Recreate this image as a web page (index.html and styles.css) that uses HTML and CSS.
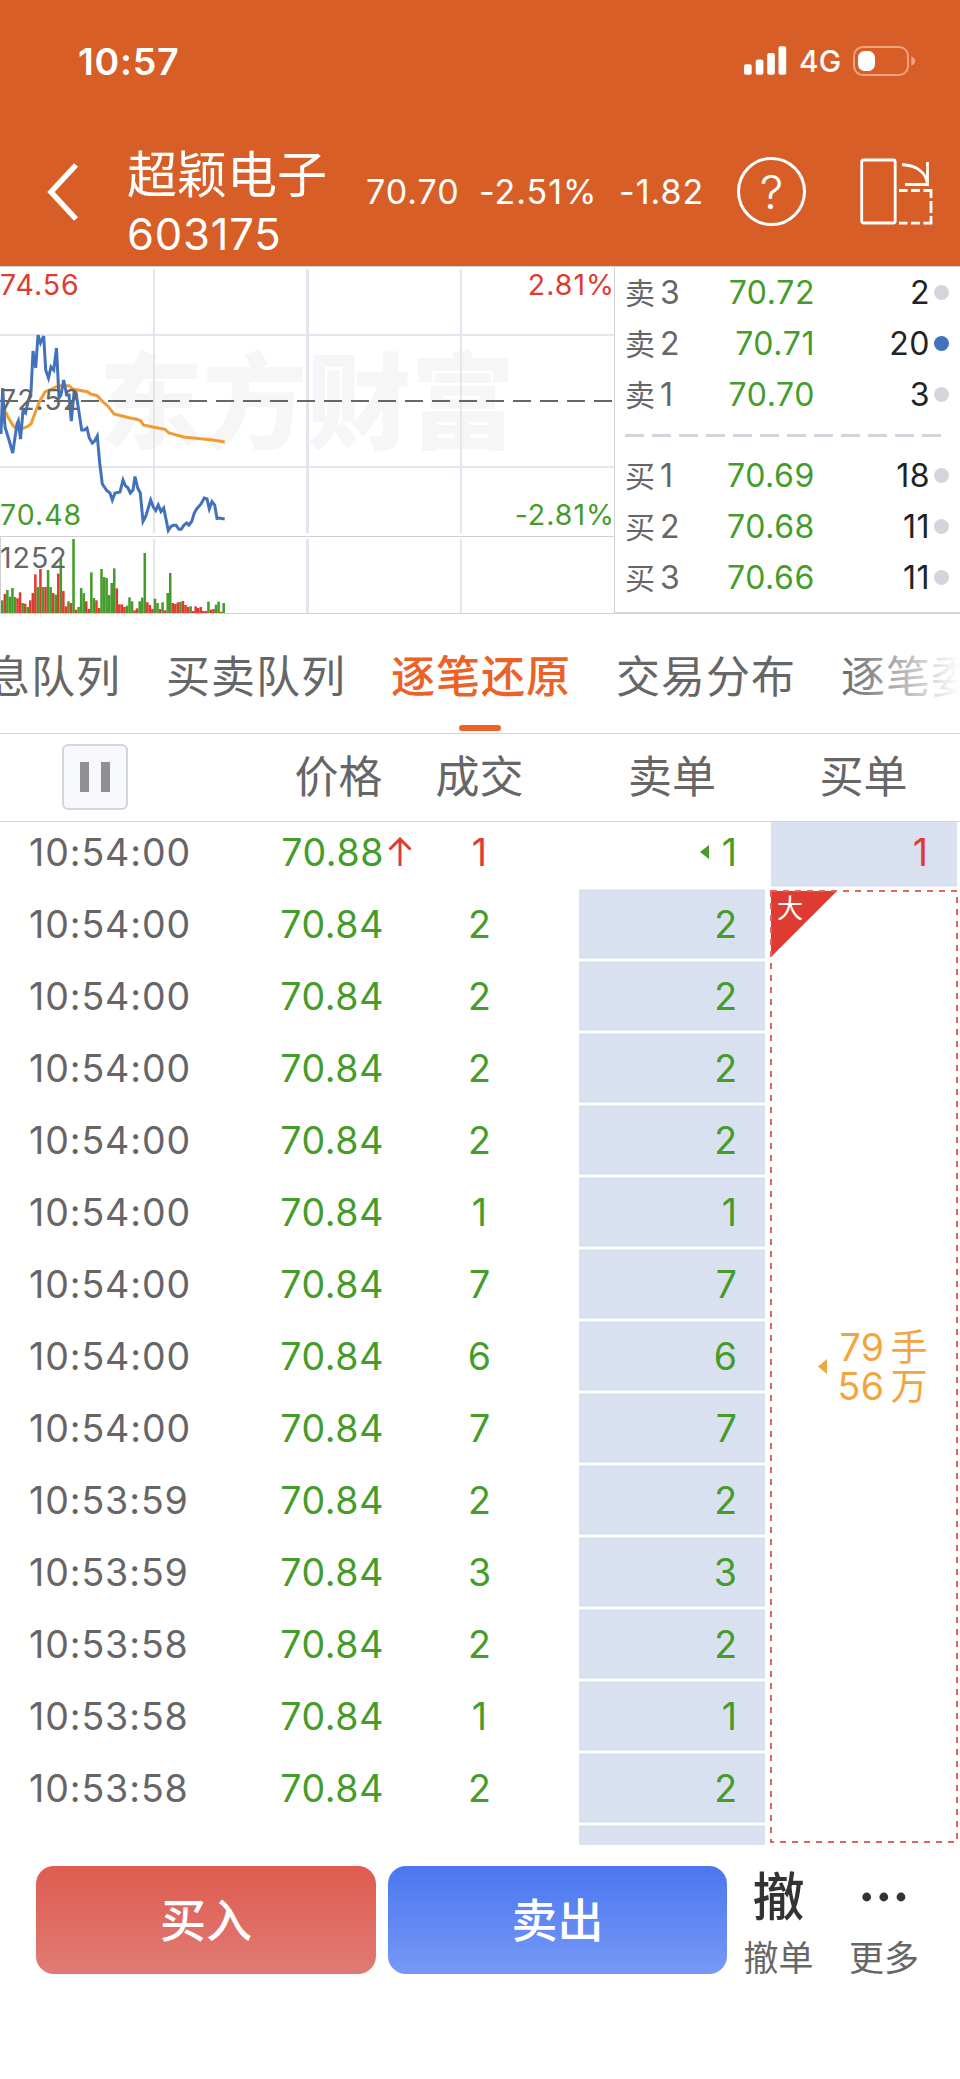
FILE: index.html
```html
<!DOCTYPE html>
<html lang="zh-CN">
<head>
    <meta charset="UTF-8">
    <meta name="viewport" content="width=device-width, initial-scale=1.0">
    <title>超颖电子 603175</title>
    <link rel="stylesheet" href="styles.css">
</head>
<body>

    <!-- Header -->
    <header class="header">
        <div class="status-bar">
            <span class="clock">10:57</span>
            <div class="status-icons">
                <svg class="signal" width="43" height="30" viewBox="0 0 43 30" fill="#fff">
                    <rect x="0" y="18.3" width="7.7" height="10.5" rx="2"/>
                    <rect x="11.7" y="13.5" width="7.7" height="15.3" rx="2"/>
                    <rect x="23.2" y="7" width="7.7" height="21.8" rx="2"/>
                    <rect x="34.5" y="0.3" width="7.7" height="28.5" rx="2"/>
                </svg>
                <span class="network">4G</span>
                <svg class="battery" width="63" height="30" viewBox="0 0 63 30">
                    <rect x="1" y="1" width="54" height="28" rx="9" fill="none" stroke="#eda57f" stroke-width="2"/>
                    <rect x="5" y="5" width="17" height="20" rx="6.5" fill="#fff"/>
                    <path d="M58.300 10.500q4 1.500 4 4.500t-4 4.500z" fill="#eda57f"/>
                </svg>
            </div>
        </div>
        <div class="nav-bar">
            <svg class="back" width="34" height="60" viewBox="0 0 34 60" fill="none" stroke="#fff" stroke-width="5.500">
                <path d="M31 3L6 30l25 27"/>
            </svg>
            <div class="stock">
                <h1>超颖电子</h1>
                <p>603175</p>
            </div>
            <div class="quote">
                <span>70.70</span>
                <span>-2.51%</span>
                <span>-1.82</span>
            </div>
            <div class="help">?</div>
            <svg class="rotate" width="75" height="68" viewBox="0 0 75 68" fill="none" stroke="#fff" stroke-width="2.800">
                <rect x="1.700" y="2" width="33.500" height="63" rx="2"/>
                <path d="M42 6.500C56 7.500 66 14 67.500 26M67.500 4v23M45 26.500h24"/>
                <path d="M39 32.500h8.500M51 32.500h9M63.500 32.500H71v7.500M71 43v12M71 58v7.200h-7.500M60 65.200h-9M47.500 65.200H39"/>
            </svg>
        </div>
    </header>

    <!-- Chart and order book -->
    <section class="market">
        <svg class="chart" width="615" height="348" viewBox="0 266 615 348">
            <text class="watermark" x="99" y="441">东方财富</text>
            <g class="grid">
                <path d="M0 335H614M0 467H614M154 269V533M461 269V533M154 539V613M461 539V613"/>
                <path class="mid" d="M307.500 269V533M307.500 539V613"/>
            </g>
            <path class="frame" d="M0 266.500H615M0 536.500H614M0 613.500H615M614.500 266V613M.5 537V613"/>
            <path class="base" d="M0 401H612"/>
            <polyline class="average" points="2,424 5,411 8.500,418 13.300,426 17,429 20,429.500 26.700,427 31,424 34.300,415 39.300,402 45,392 51.700,389 58.300,385.700 69.300,385.700 72.700,389 87.300,391.700 90.700,394 97.300,395.700 101.700,400.700 108.300,406.700 114,414 125,416.700 130,418 136,419 140.700,420.700 143.300,425 154,427.300 165,429.300 169,433 183.300,437 213,440 224.700,442"/>
            <polyline class="price" points="1,434 2.700,388 5,427 9,440 12.700,453 17,424 18.300,421 20.500,439 23,411 25.500,413 28,402 31,392 33,351 35.700,368 38,335 40.500,343 43.700,336 45.700,370 48.500,378 51,367 53.700,370 56.500,348 59,398 61,395 63.700,380 66.700,395 69,395 71.300,421 74,393 76.700,397 81.700,430 84.300,430 87,428 89.300,438 92.300,443 94.300,441.500 97.300,436 99.700,463 102.300,484 106.700,490.500 110,493 112.300,500 115,493 120,492 123,480 125.300,485.500 128,488 130.300,493 133,490 135,476.500 137.700,488 140.300,493 143,521.500 145.700,516.500 150.700,500 153.300,507 155.700,510.500 158.300,505 161,511.500 163.700,508 168.300,530.500 171,526.500 173.500,525.300 176,525.300 179,529.300 181.300,529.300 184,525 186.700,523 189,525 191.700,521.500 194.300,513 196.700,509 201,504 204.300,498 207,499 209.300,509 212,501.500 214.700,505 217,518.500 219,518 224.700,519"/>
            <g id="volume"></g>
            <text class="label red" x="0" y="295">74.56</text>
            <text class="label red" x="615" y="295" text-anchor="end">2.81%</text>
            <text class="label grey" x="0" y="410">72.52</text>
            <text class="label green" x="0" y="525">70.48</text>
            <text class="label green" x="615" y="525" text-anchor="end">-2.81%</text>
            <text class="label grey" x="0" y="568">1252</text>
        </svg>

        <div class="order-book">
            <div class="order"><span class="side"><i>卖</i>3</span><span class="price">70.72</span><span class="qty">2</span><span class="dot"></span></div>
            <div class="order"><span class="side"><i>卖</i>2</span><span class="price">70.71</span><span class="qty">20</span><span class="dot blue"></span></div>
            <div class="order"><span class="side"><i>卖</i>1</span><span class="price">70.70</span><span class="qty">3</span><span class="dot"></span></div>
            <div class="divider"></div>
            <div class="order"><span class="side"><i>买</i>1</span><span class="price">70.69</span><span class="qty">18</span><span class="dot"></span></div>
            <div class="order"><span class="side"><i>买</i>2</span><span class="price">70.68</span><span class="qty">11</span><span class="dot"></span></div>
            <div class="order"><span class="side"><i>买</i>3</span><span class="price">70.66</span><span class="qty">11</span><span class="dot"></span></div>
        </div>
    </section>

    <!-- Tabs -->
    <nav class="tabs">
        <a>信息队列</a>
        <a>买卖队列</a>
        <a class="active">逐笔还原</a>
        <a>交易分布</a>
        <a>逐笔委托</a>
    </nav>

    <!-- Table -->
    <div class="table-head">
        <button class="pause" aria-label="暂停"><span></span><span></span></button>
        <span class="col-price">价格</span>
        <span class="col-volume">成交</span>
        <span class="col-sell">卖单</span>
        <span class="col-buy">买单</span>
    </div>
    <main class="table-body">
        <div class="rows">
            <div class="row"><span class="time">10:54:00</span><span class="price">70.88</span><svg class="up" width="24" height="30" viewBox="0 0 24 30"><path d="M12 29V2M1.500 12.500L12 2l10.500 10.500"/></svg><span class="volume red">1</span><span class="sell plain"><svg width="9" height="14" viewBox="0 0 9 14"><path d="M9 0v14L0 7z" fill="#459c2b"/></svg>1</span></div>
            <div class="row"><span class="time">10:54:00</span><span class="price">70.84</span><span class="volume">2</span><span class="sell">2</span></div>
            <div class="row"><span class="time">10:54:00</span><span class="price">70.84</span><span class="volume">2</span><span class="sell">2</span></div>
            <div class="row"><span class="time">10:54:00</span><span class="price">70.84</span><span class="volume">2</span><span class="sell">2</span></div>
            <div class="row"><span class="time">10:54:00</span><span class="price">70.84</span><span class="volume">2</span><span class="sell">2</span></div>
            <div class="row"><span class="time">10:54:00</span><span class="price">70.84</span><span class="volume">1</span><span class="sell">1</span></div>
            <div class="row"><span class="time">10:54:00</span><span class="price">70.84</span><span class="volume">7</span><span class="sell">7</span></div>
            <div class="row"><span class="time">10:54:00</span><span class="price">70.84</span><span class="volume">6</span><span class="sell">6</span></div>
            <div class="row"><span class="time">10:54:00</span><span class="price">70.84</span><span class="volume">7</span><span class="sell">7</span></div>
            <div class="row"><span class="time">10:53:59</span><span class="price">70.84</span><span class="volume">2</span><span class="sell">2</span></div>
            <div class="row"><span class="time">10:53:59</span><span class="price">70.84</span><span class="volume">3</span><span class="sell">3</span></div>
            <div class="row"><span class="time">10:53:58</span><span class="price">70.84</span><span class="volume">2</span><span class="sell">2</span></div>
            <div class="row"><span class="time">10:53:58</span><span class="price">70.84</span><span class="volume">1</span><span class="sell">1</span></div>
            <div class="row"><span class="time">10:53:58</span><span class="price">70.84</span><span class="volume">2</span><span class="sell">2</span></div>
            <div class="row"><span class="sell"></span></div>
        </div>
        <div class="buy-orders">
            <div class="buy">1</div>
            <div class="big-order">
                <svg class="outline" width="190" height="955" viewBox="769 889 190 955">
                    <path d="M771 891h66l-66 66z" fill="#de3c33"/>
                    <rect x="771" y="891" width="186" height="951" fill="none" stroke="#e4625d" stroke-width="2" stroke-dasharray="6 6"/>
                </svg>
                <span class="tag">大</span>
                <svg width="9" height="15" viewBox="0 0 9 15"><path d="M9 0v15L0 7.500z" fill="#f2a53f"/></svg>
                <p>79<i>手</i><br>56<i>万</i></p>
            </div>
        </div>
    </main>

    <!-- Trade bar -->
    <footer class="trade-bar">
        <button class="btn btn-buy">买入</button>
        <button class="btn btn-sell">卖出</button>
        <div class="action cancel">
            <strong>撤</strong>
            <span>撤单</span>
        </div>
        <div class="action more">
            <svg width="44" height="52" viewBox="0 0 44 52" fill="#333"><circle cx="4.700" cy="27" r="4.400"/><circle cx="21.800" cy="27" r="4.400"/><circle cx="39" cy="27" r="4.400"/></svg>
            <span>更多</span>
        </div>
    </footer>

    <script>
        // Volume bars, one per minute: positive = up (red), negative = down (green)
        const volumes = [
            -38, 57, -69, -49, -75, -48, 44, 62, -30, 28, -18, 38, 60, 116, -78, 132, -78, 78, -129, -78,
            60, -55, 118, -165, 66, 20, -35, 30, -222, 10, -18, -75, -60, 35, 12, -122, -45, 38, 15, -132,
            -108, -105, -54, -90, -134, 74, 26, 26, 18, -22, -47, -35, 8, 14, -35, -46, -180, 32, 24, 12,
            -43, -30, 12, -32, 8, -60, -120, 30, 27, 32, -33, 36, 24, 18, -20, 6, 20, 15, 18, 6,
            6, -34, 10, 12, -25, -34, 4, -30
        ];
        const step = 2.545;
        const volumeGroup = document.getElementById('volume');

        volumes.forEach((value, i) => {
            const height = Math.abs(value) / 3;
            const bar = document.createElementNS('http://www.w3.org/2000/svg', 'rect');
            bar.setAttribute('x', 1 + i * step);
            bar.setAttribute('y', 613 - height);
            bar.setAttribute('width', step);
            bar.setAttribute('height', height);
            bar.setAttribute('fill', value > 0 ? '#de3c33' : '#459c2b');
            volumeGroup.appendChild(bar);
        });
    </script>

</body>
</html>
```
FILE: styles.css
```css
* {
    box-sizing: border-box;
}
body {
    margin: 0;
    width: 960px;
    height: 2079px;
    overflow: hidden;
    background-color: #fff;
    color: #666;
    font-family: Inter, "Noto Sans CJK SC", sans-serif;
}
h1, p {
    margin: 0;
    font-weight: 400;
}
i {
    font-style: normal;
}
button {
    border: none;
    padding: 0;
    font-family: inherit;
}
.red {
    color: #de3c33;
    fill: #de3c33;
}
.green {
    color: #459c2b;
    fill: #459c2b;
}
.grey {
    fill: #666;
}

/* Header */
.header {
    height: 266px;
    background-color: #d75f27;
    color: #fff;
}
.status-bar {
    display: flex;
    justify-content: space-between;
    align-items: center;
    height: 122px;
    padding: 0 44px 0 78px;
}
.clock {
    font-size: 37.5px;
    font-weight: 600;
    letter-spacing: 0.7px;
}
.status-icons {
    display: flex;
    align-items: center;
}
.network {
    width: 66px;
    text-align: center;
    font-size: 30px;
    font-weight: 500;
}
.nav-bar {
    display: flex;
    align-items: center;
    height: 139px;
    padding-left: 45px;
}
.stock {
    width: 206px;
    margin: 24px 0 0 48px;
}
.stock h1 {
    font-size: 50px;
    line-height: 60px;
}
.stock p {
    font-size: 43.5px;
    line-height: 58px;
    letter-spacing: 0.8px;
}
.quote {
    display: grid;
    grid-template-columns: 113px 140px 118px;
    margin-left: 33px;
    font-size: 34px;
    letter-spacing: 1px;
    white-space: nowrap;
}
.help {
    width: 69px;
    height: 69px;
    border: 3px solid #fff;
    border-radius: 50%;
    text-align: center;
    font-size: 47px;
    font-weight: 300;
    line-height: 63px;
}
.rotate {
    margin-left: 54px;
}

/* Chart */
.market {
    display: flex;
    height: 348px;
}
.chart {
    flex: none;
}
.watermark {
    font-size: 104px;
    font-weight: 900;
    fill: #f6f6f6;
}
.grid path {
    stroke: #e4e6ee;
    stroke-width: 2;
}
.grid .mid {
    stroke-width: 3;
}
.frame {
    fill: none;
    stroke: #d0d0d6;
}
.base {
    stroke: #666;
    stroke-width: 2;
    stroke-dasharray: 18 9;
}
.average, .chart .price {
    fill: none;
    stroke: #f09b33;
    stroke-width: 3;
}
.chart .price {
    stroke: #4272bb;
}
.label {
    font-size: 28.5px;
    letter-spacing: 1px;
}

/* Order book */
.order-book {
    flex: 1;
    border-top: 1px solid #d4d5dc;
    border-bottom: 2px solid #d4d5dc;
}
.order {
    display: flex;
    align-items: center;
    height: 51px;
    padding-left: 10px;
    font-size: 32px;
    line-height: 51px;
}
.side i {
    font-size: 30px;
    margin-right: 5px;
}
.side {
    width: 70px;
}
.order .price {
    width: 120px;
    text-align: right;
    color: #459c2b;
    letter-spacing: 0.6px;
}
.qty {
    width: 115px;
    text-align: right;
    color: #222;
    letter-spacing: 0.5px;
}
.dot {
    width: 15px;
    height: 15px;
    margin-left: 4px;
    border-radius: 50%;
    background-color: #d4d5dc;
}
.dot.blue {
    background-color: #4272bb;
}
.divider {
    width: 316px;
    height: 3px;
    margin: 14px 0 13px 10px;
    background: repeating-linear-gradient(to right, #d4d5dc 0 19px, transparent 19px 27px);
}

/* Tabs */
.tabs {
    position: relative;
    display: flex;
    gap: 45px;
    height: 120px;
    border-bottom: 1px solid #d4d6d8;
    overflow: hidden;
    font-size: 44px;
    line-height: 126px;
    letter-spacing: 1px;
    white-space: nowrap;
}
.tabs a {
    flex: none;
    width: 180px;
}
.tabs a:first-child {
    margin-left: -59px;
}
.tabs .active {
    position: relative;
    color: #eb6228;
    font-weight: 500;
}
.tabs .active::after {
    content: "";
    position: absolute;
    left: 68px;
    bottom: 2px;
    width: 42px;
    height: 6px;
    border-radius: 3px;
    background-color: #eb6228;
}
/* Fade on the right edge */
.tabs::after {
    content: "";
    position: absolute;
    right: 0;
    top: 0;
    width: 120px;
    height: 119px;
    background: linear-gradient(to right, rgba(255, 255, 255, 0), #fff);
}

/* Table */
.table-head {
    display: flex;
    align-items: center;
    height: 88px;
    padding-bottom: 2px;
    border-bottom: 1px solid #d4d6d8;
    font-size: 44px;
    line-height: 84px;
    text-align: center;
}
.pause {
    display: flex;
    justify-content: center;
    align-items: center;
    gap: 12px;
    width: 66px;
    height: 66px;
    margin: 0 143px 0 62px;
    border: 2px solid #d3d5dd;
    border-radius: 6px;
    background-color: #f6f8fb;
}
.pause span {
    width: 9px;
    height: 30px;
    background-color: #8f8e93;
}
.col-price {
    width: 135px;
}
.col-volume {
    width: 147px;
}
.col-sell {
    width: 238px;
}
.col-buy {
    width: 145px;
}
.table-body {
    display: flex;
    gap: 4px;
    height: 1023px;
    overflow: hidden;
    font-size: 37.5px;
}
.rows {
    width: 765px;
    margin-top: -6px;
}
.row {
    display: flex;
    align-items: center;
    height: 72px;
}
.time {
    width: 230px;
    padding-left: 29px;
    letter-spacing: 0.9px;
}
.rows .price {
    width: 154px;
    text-align: right;
    color: #459c2b;
    letter-spacing: 0.6px;
}
.up {
    width: 24px;
    margin: 0 -28px 0 4px;
    fill: none;
    stroke: #de3c33;
    stroke-width: 3;
}
.volume {
    width: 191px;
    text-align: center;
    color: #459c2b;
}
.volume.red {
    color: #de3c33;
}
.sell {
    display: flex;
    justify-content: flex-end;
    align-items: center;
    gap: 13px;
    width: 186px;
    height: 70px;
    margin-left: auto;
    padding-right: 28px;
    border: solid #e9eef7;
    border-width: 1px 0;
    background-color: #d9e1f0;
    color: #459c2b;
}
.sell.plain {
    border-color: transparent;
    background: none;
}
.buy-orders {
    width: 190px;
}
.buy {
    width: 186px;
    height: 65px;
    margin: 0 0 2px 2px;
    padding-right: 29px;
    border-bottom: 1px solid #e9eef7;
    background-color: #d9e1f0;
    color: #de3c33;
    text-align: right;
    line-height: 61px;
}
.big-order {
    position: relative;
    display: flex;
    justify-content: flex-end;
    align-items: center;
    gap: 10px;
    height: 955px;
    padding-right: 31px;
    color: #f2a53f;
}
.big-order p {
    line-height: 39px;
    text-align: right;
    letter-spacing: 0.5px;
    white-space: nowrap;
}
.big-order i {
    font-size: 37px;
    margin-left: 6px;
}
.outline {
    position: absolute;
    left: 0;
    top: 0;
}
.tag {
    position: absolute;
    left: 8px;
    top: 4px;
    color: #fff;
    font-size: 26px;
    line-height: 32px;
}

/* Trade bar */
.trade-bar {
    display: flex;
    padding: 21px 0 0 36px;
}
.btn {
    width: 340px;
    height: 108px;
    margin-right: 12px;
    border-radius: 18px;
    color: #fff;
    font-size: 46px;
    font-weight: 500;
    line-height: 109px;
}
.btn-buy {
    background: linear-gradient(#df5c50, #df7b74);
}
.btn-sell {
    width: 339px;
    background: linear-gradient(#4b76ef, #7699f7);
}
.action {
    display: flex;
    flex-direction: column;
    align-items: center;
    font-size: 35px;
    line-height: 52px;
}
.action strong {
    height: 66px;
    color: #333;
    font-size: 52px;
    font-weight: 500;
    line-height: 64px;
}
.cancel {
    width: 79px;
}
.more {
    width: 80px;
    margin-left: 26px;
}
.more svg {
    margin: 4px 0 10px;
}
```
